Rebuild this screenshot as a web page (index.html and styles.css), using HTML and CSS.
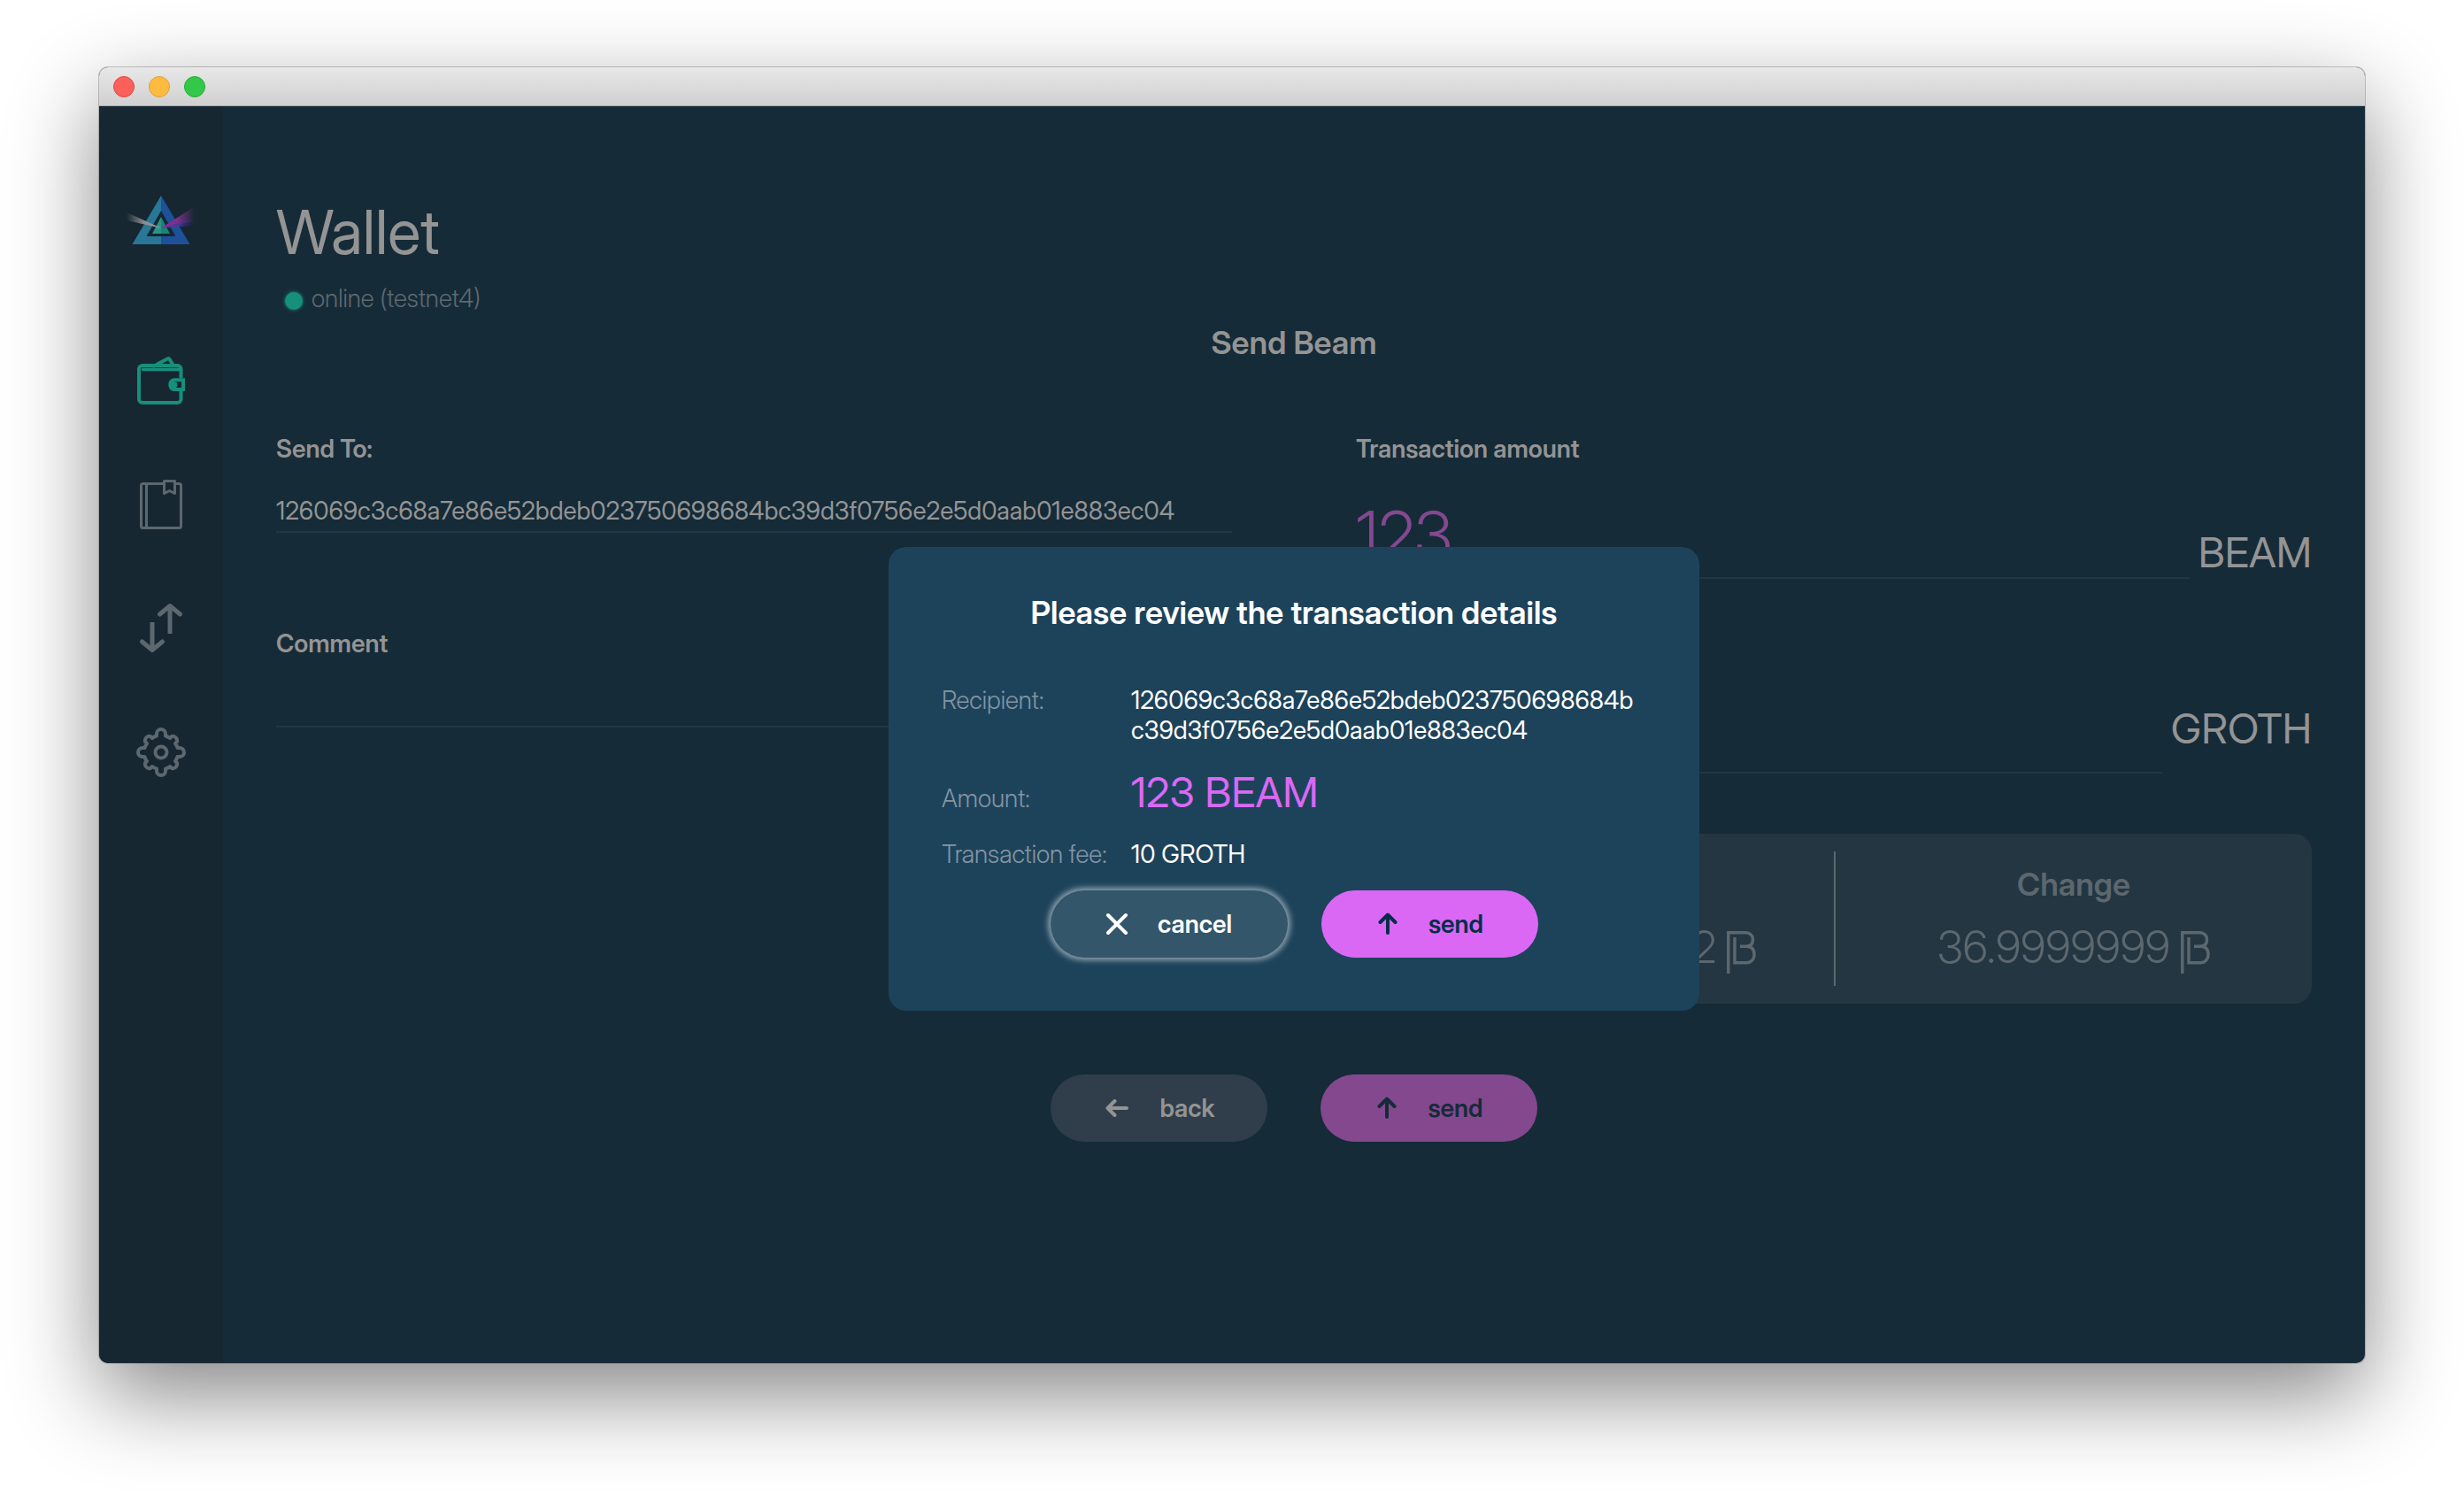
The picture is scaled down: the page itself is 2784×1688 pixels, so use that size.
FILE: index.html
```html
<!DOCTYPE html>
<html lang="en">
<head>
<meta charset="utf-8">
<title>Beam Wallet</title>
<link rel="stylesheet" href="styles.css">
</head>
<body>
<div class="window">
  <div class="titlebar">
    <button class="light light-close" aria-label="Close"></button>
    <button class="light light-minimize" aria-label="Minimize"></button>
    <button class="light light-zoom" aria-label="Zoom"></button>
  </div>
  <div class="app">
    <aside class="sidebar">
      <svg class="logo" width="80" height="60" viewBox="0 0 80 60" aria-hidden="true">
        <defs>
          <linearGradient id="ray-in" x1="1" x2="0"><stop offset="0" stop-color="#a09c9c"/><stop offset=".5" stop-color="#8d8d8f"/><stop offset="1" stop-color="#8d8d8f" stop-opacity="0"/></linearGradient>
          <linearGradient id="ray-pink" x1="0" x2="1"><stop offset="0" stop-color="#8a2c98"/><stop offset=".5" stop-color="#7b3189"/><stop offset="1" stop-color="#7b3189" stop-opacity="0"/></linearGradient>
          <linearGradient id="ray-violet" x1="0" x2="1"><stop offset="0" stop-color="#7a2a9a"/><stop offset=".5" stop-color="#453a92"/><stop offset="1" stop-color="#2d2080" stop-opacity="0"/></linearGradient>
        </defs>
        <path fill="#287796" d="M40 1 7.500 56H40v-9H23.500L40 18z"/>
        <path fill="#1d5199" d="M40 1l32.500 55H40v-9h16.500L40 18z"/>
        <path fill="#2b9488" d="M40 25 30 44h10z"/>
        <path fill="#1a8478" d="M40 25l10 19H40z"/>
        <path fill="url(#ray-in)" d="M41 38 1 29v-9z"/>
        <path fill="url(#ray-pink)" d="M40 37.500 77 14v16z"/>
        <path fill="url(#ray-violet)" d="M40 37.500 78 27v8z"/>
      </svg>
      <nav class="nav" aria-label="Main">
        <a class="nav-item nav-item-active" href="#wallet" aria-label="Wallet">
          <svg width="60" height="60" viewBox="0 0 60 60" fill="none" stroke="currentColor" stroke-width="4">
            <path d="M52.500 27V17a4 4 0 0 0-4-4H9a4 4 0 0 0-4 4v34a4 4 0 0 0 4 4h39.500a4 4 0 0 0 4-4V42"/>
            <path stroke-width="3.500" stroke-linecap="round" d="M9.500 17.500H51"/>
            <path stroke-linejoin="round" d="M20 14.500 37 5.500q2-1 3 1l4.500 8"/>
            <path d="M55 29.300H44.500a5.500 5.500 0 0 0 0 10.700H55z"/>
            <circle cx="45" cy="34.700" r="3.400" fill="currentColor" stroke="none"/>
          </svg>
        </a>
        <a class="nav-item" href="#addresses" aria-label="Addresses">
          <svg width="60" height="60" viewBox="0 0 60 60" fill="none" stroke="currentColor" stroke-width="3" stroke-linejoin="round">
            <path d="M33 6.500H9.500a2 2 0 0 0-2 2v46a2 2 0 0 0 2 2h41a2 2 0 0 0 2-2v-46a2 2 0 0 0-2-2H46M13.500 7v49M33.500 3.500h12v14l-6-3-6 3z"/>
          </svg>
        </a>
        <a class="nav-item" href="#transactions" aria-label="Transactions">
          <svg width="60" height="60" viewBox="0 0 60 60" fill="none" stroke="currentColor" stroke-width="5" stroke-linejoin="round">
            <path d="M20 23v31M40 36V5"/>
            <path stroke-linecap="round" d="M8.500 45 20 54.500 31.500 45M28.500 14 40 4.500 51.500 14"/>
          </svg>
        </a>
        <a class="nav-item" href="#settings" aria-label="Settings">
          <svg width="60" height="60" viewBox="0 0 60 60" fill="none" stroke="currentColor" stroke-width="4" stroke-linejoin="round">
            <circle cx="30" cy="30" r="6.500"/>
            <path d="M25 11.500V9a5 5 0 0 1 10 0v2.500q3 1 5 2.500l2-2a5 5 0 0 1 6 6l-2 2q2 2 2.500 5H51a5 5 0 0 1 0 10h-2.500q-1 3-2.500 5l2 2a5 5 0 0 1-6 6l-2-2q-2 2-5 2.500V51a5 5 0 0 1-10 0v-2.500q-3-1-5-2.500l-2 2a5 5 0 0 1-6-6l2-2q-2-2-2.500-5H9a5 5 0 0 1 0-10h2.500q1-3 2.500-5l-2-2a5 5 0 0 1 6-6l2 2q2-2 5-2.500z"/>
          </svg>
        </a>
      </nav>
    </aside>
    <main class="content">
      <h1 class="page-title">Wallet</h1>
      <p class="status"><span class="status-dot"></span>online (testnet4)</p>
      <h2 class="section-title">Send Beam</h2>
      <form class="form">
        <div class="column">
          <div class="field">
            <label class="label" for="send-to">Send To:</label>
            <input class="input" id="send-to" type="text" value="126069c3c68a7e86e52bdeb023750698684bc39d3f0756e2e5d0aab01e883ec04">
          </div>
          <div class="field field-comment">
            <label class="label" for="comment">Comment</label>
            <input class="input" id="comment" type="text">
          </div>
        </div>
        <div class="column">
          <div class="field">
            <label class="label" for="amount">Transaction amount</label>
            <div class="amount-row">
              <input class="input input-amount" id="amount" type="text" value="123">
              <span class="unit">BEAM</span>
            </div>
          </div>
          <div class="field field-fee">
            <label class="label" for="fee">Transaction fee</label>
            <div class="amount-row">
              <input class="input input-amount" id="fee" type="text" value="10">
              <span class="unit unit-fee">GROTH</span>
            </div>
          </div>
          <div class="summary">
            <div class="summary-cell">
              <h3 class="summary-title">Remaining</h3>
              <p class="summary-value">2436.9999992<svg class="beam" width="33" height="48" viewBox="0 0 33 48" fill="none" stroke="currentColor" stroke-width="3.500"><path d="M1.800 48V1.800H22a7.500 7.500 0 0 1 7.500 7.500q0 8-7.500 8h-7M22 17.300q9 0 9 9v1a8.500 8.500 0 0 1-8.500 8.500H9V7"/></svg></p>
            </div>
            <div class="summary-cell">
              <h3 class="summary-title">Change</h3>
              <p class="summary-value">36.9999999<svg class="beam" width="33" height="48" viewBox="0 0 33 48" fill="none" stroke="currentColor" stroke-width="3.500"><path d="M1.800 48V1.800H22a7.500 7.500 0 0 1 7.500 7.500q0 8-7.500 8h-7M22 17.300q9 0 9 9v1a8.500 8.500 0 0 1-8.500 8.500H9V7"/></svg></p>
            </div>
          </div>
        </div>
        <div class="actions">
          <button class="btn btn-back" type="button">
            <svg width="26" height="26" viewBox="0 0 26 26" fill="none" stroke="currentColor" stroke-width="4" stroke-linecap="round" stroke-linejoin="round"><path d="M24 13H3M10.500 5 2.500 13l8 8"/></svg>
            back
          </button>
          <button class="btn btn-send-dim" type="button">
            <svg width="22" height="26" viewBox="0 0 22 26" fill="none" stroke="currentColor" stroke-width="4" stroke-linecap="round" stroke-linejoin="round"><path d="M11 23V3M2.500 11 11 2.500l8.500 8.500"/></svg>
            send
          </button>
        </div>
      </form>
      <div class="overlay">
        <section class="dialog" role="dialog" aria-labelledby="dialog-title">
          <h2 class="dialog-title" id="dialog-title">Please review the transaction details</h2>
          <dl class="details">
            <dt>Recipient:</dt>
            <dd>126069c3c68a7e86e52bdeb023750698684bc39d3f0756e2e5d0aab01e883ec04</dd>
            <dt>Amount:</dt>
            <dd class="details-amount">123 BEAM</dd>
            <dt>Transaction fee:</dt>
            <dd>10 GROTH</dd>
          </dl>
          <div class="dialog-actions">
            <button class="btn btn-cancel" type="button">
              <svg width="26" height="26" viewBox="0 0 26 26" fill="none" stroke="currentColor" stroke-width="4" stroke-linecap="round"><path d="M3 3l20 20M23 3 3 23"/></svg>
              cancel
            </button>
            <button class="btn btn-send" type="button">
              <svg width="22" height="26" viewBox="0 0 22 26" fill="none" stroke="currentColor" stroke-width="4" stroke-linecap="round" stroke-linejoin="round"><path d="M11 23V3M2.500 11 11 2.500l8.500 8.500"/></svg>
              send
            </button>
          </div>
        </section>
      </div>
    </main>
  </div>
</div>
</body>
</html>
```
FILE: styles.css
```css
* {
  box-sizing: border-box;
  margin: 0;
  padding: 0;
}

body {
  display: flex;
  min-height: 100vh;
  padding: 76px 112px 148px;
  background: #fff;
  color: #949494;
  font-family: "Inter Display", Inter, sans-serif;
  font-size: 28px;
  line-height: 34px;
}

/* Window frame */

.window {
  flex: 1;
  display: flex;
  flex-direction: column;
  border-radius: 10px;
  background: #162b38;
  box-shadow: 0 0 0 1px rgba(0, 0, 0, 0.2), 0 36px 100px rgba(0, 0, 0, 0.48);
  overflow: hidden;
}

.titlebar {
  display: flex;
  align-items: center;
  gap: 16px;
  height: 44px;
  padding: 0 16px;
  border-bottom: 1px solid #adadad;
  background: linear-gradient(#e8e8e8, #d0d0d0);
}

.light {
  width: 24px;
  height: 24px;
  border: 1px solid;
  border-radius: 50%;
}

.light-close {
  border-color: #e2463f;
  background: #fc605b;
}

.light-minimize {
  border-color: #dfa033;
  background: #fdbc40;
}

.light-zoom {
  border-color: #27aa35;
  background: #34c84a;
}

.app {
  flex: 1;
  display: flex;
}

/* Sidebar */

.sidebar {
  display: flex;
  flex-direction: column;
  align-items: center;
  width: 140px;
  padding-top: 100px;
  background: #162732;
}

.logo {
  display: block;
}

.nav {
  display: flex;
  flex-direction: column;
  gap: 80px;
  margin-top: 120px;
}

.nav-item {
  display: block;
  height: 60px;
  color: #5c676e;
}

.nav-item-active {
  color: #168f7b;
}

/* Page */

.content {
  position: relative;
  flex: 1;
  padding: 102px 60px 60px;
}

.page-title {
  font-size: 69px;
  font-weight: 400;
  line-height: 80px;
}

.status {
  display: flex;
  align-items: center;
  gap: 10px;
  margin-top: 19px;
  padding-left: 10px;
  color: #5c6970;
  font-weight: 300;
  line-height: 32px;
}

.status-dot {
  width: 20px;
  height: 20px;
  margin-top: 6px;
  border-radius: 50%;
  background: #168f7b;
  box-shadow: 0 0 4px #168f7b;
}

.section-title {
  margin-top: 12px;
  font-size: 36px;
  font-weight: 600;
  line-height: 44px;
  text-align: center;
}

.form {
  display: grid;
  grid-template-columns: 1fr 1fr;
  gap: 80px 140px;
  margin-top: 81px;
}

.field-comment {
  margin-top: 108px;
}

.field-fee {
  margin-top: 56px;
}

.label {
  display: block;
  margin-bottom: 36px;
  font-weight: 600;
}

.input {
  display: block;
  width: 100%;
  height: 42px;
  padding-bottom: 6px;
  border: 0;
  border-bottom: 2px solid #233642;
  background: none;
  color: #949494;
  font-family: inherit;
  font-size: 28px;
  line-height: 34px;
  outline: 0;
}

.amount-row {
  display: flex;
  align-items: flex-end;
  gap: 10px;
}

.input-amount {
  flex: 1;
  min-width: 0;
  height: 94px;
  padding-bottom: 4px;
  color: #84488f;
  font-size: 74px;
  font-weight: 300;
  line-height: 88px;
}

.unit {
  margin-bottom: 2px;
  font-size: 47px;
  line-height: 56px;
}

.unit-fee {
  margin-bottom: 23px;
}

.summary {
  display: grid;
  grid-template-columns: 1fr 1fr;
  margin-top: 68px;
  padding: 20px 0;
  border-radius: 20px;
  background: #233642;
  color: #5c676e;
}

.summary-cell {
  padding: 15px 0 14px;
  text-align: center;
}

.summary-cell + .summary-cell {
  border-left: 2px solid #5c676e;
}

.summary-title {
  font-size: 36px;
  font-weight: 600;
  line-height: 44px;
}

.summary-value {
  display: flex;
  justify-content: center;
  align-items: center;
  gap: 12px;
  margin-top: 19px;
  font-size: 50px;
  font-weight: 300;
  line-height: 60px;
}

.beam {
  margin-top: 12px;
}

/* Buttons */

.actions,
.dialog-actions {
  grid-column: 1 / -1;
  display: flex;
  justify-content: center;
}

.actions {
  gap: 60px;
}

.btn {
  display: flex;
  justify-content: center;
  align-items: center;
  gap: 35px;
  width: 245px;
  height: 76px;
  padding-left: 3px;
  border: 0;
  border-radius: 38px;
  font-family: inherit;
  font-size: 28px;
  font-weight: 600;
  line-height: 34px;
}

.btn-back {
  background: #2f3e4a;
  color: #949494;
}

.btn-send-dim {
  background: #84488f;
  color: #162b38;
}

.btn-send {
  background: #da68f5;
  color: #032e49;
}

.btn-cancel {
  gap: 33px;
  width: 268px;
  padding-left: 0;
  background: #34566a;
  box-shadow: 0 0 6px 3px rgba(255, 255, 255, 0.5);
  color: #fff;
}

/* Review dialog */

.overlay {
  position: absolute;
  inset: 0;
  display: grid;
  place-content: center;
  padding-top: 100px;
}

.dialog {
  padding: 52px 60px 60px;
  border-radius: 20px;
  background: #1d435b;
  color: #fff;
}

.dialog-title {
  font-size: 36px;
  font-weight: 600;
  line-height: 44px;
  text-align: center;
}

.details {
  display: grid;
  grid-template-columns: 214px 574px;
  align-items: baseline;
  gap: 25px 0;
  width: 796px;
  margin-top: 60px;
}

.details dt {
  color: #8495a3;
  font-weight: 300;
}

.details dd {
  word-break: break-all;
}

.details .details-amount {
  color: #da68f5;
  font-size: 47px;
  line-height: 56px;
}

.dialog-actions {
  gap: 38px;
  margin-top: 24px;
}
```
